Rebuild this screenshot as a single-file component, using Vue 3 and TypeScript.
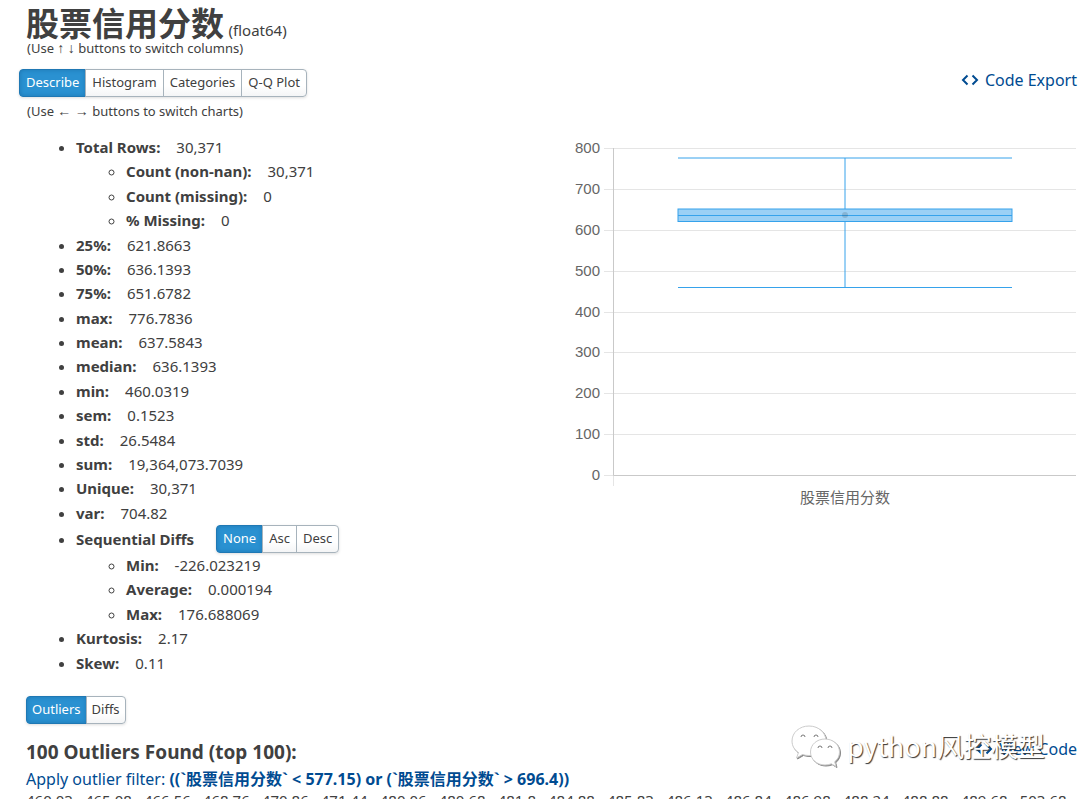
<script setup lang="ts">
import { ref } from 'vue'

interface Stat { label: string; value: string; children?: Stat[] }

const column = '股票信用分数'
const charts = ['Describe', 'Histogram', 'Categories', 'Q-Q Plot']
const sorts = ['None', 'Asc', 'Desc']
const views = ['Outliers', 'Diffs']
const chart = ref('Describe')
const sort = ref('None')
const view = ref('Outliers')

const stats: Stat[] = [
  {
    label: 'Total Rows:', value: '30,371', children: [
      { label: 'Count (non-nan):', value: '30,371' },
      { label: 'Count (missing):', value: '0' },
      { label: '% Missing:', value: '0' },
    ],
  },
  { label: '25%:', value: '621.8663' },
  { label: '50%:', value: '636.1393' },
  { label: '75%:', value: '651.6782' },
  { label: 'max:', value: '776.7836' },
  { label: 'mean:', value: '637.5843' },
  { label: 'median:', value: '636.1393' },
  { label: 'min:', value: '460.0319' },
  { label: 'sem:', value: '0.1523' },
  { label: 'std:', value: '26.5484' },
  { label: 'sum:', value: '19,364,073.7039' },
  { label: 'Unique:', value: '30,371' },
  { label: 'var:', value: '704.82' },
  {
    label: 'Sequential Diffs', value: '', children: [
      { label: 'Min:', value: '-226.023219' },
      { label: 'Average:', value: '0.000194' },
      { label: 'Max:', value: '176.688069' },
    ],
  },
  { label: 'Kurtosis:', value: '2.17' },
  { label: 'Skew:', value: '0.11' },
]

const outliers = [
  '460.03', '465.08', '466.56', '468.76', '470.86', '471.44', '480.06', '480.68', '481.8',
  '484.88', '485.83', '486.13', '486.84', '486.98', '488.24', '488.88', '489.68', '503.68',
]

const ticks = [800, 700, 600, 500, 400, 300, 200, 100, 0]
const tickY = (v: number) => Math.round(340 - v * 0.40875) + 0.5
</script>

<template>
  <main class="page">
    <header>
      <h1>{{ column }} <small>(float64)</small></h1>
      <p class="hint">(Use <span class="arrow">↑ ↓</span> buttons to switch columns)</p>
      <div class="toolbar">
        <div class="group">
          <button v-for="c in charts" :key="c" type="button" :class="{ active: chart === c }" @click="chart = c">{{ c }}</button>
        </div>
        <a class="code" href="#export">
          <svg width="18" height="12" viewBox="0 0 18 12"><path d="M6.500 1.500 2 6 6.500 10.500M11.500 1.500 16 6 11.500 10.500" /></svg>
          <span>Code Export</span>
        </a>
      </div>
      <p class="hint">(Use <span class="arrow">← →</span> buttons to switch charts)</p>
    </header>

    <section class="content">
      <ul class="stats">
        <li v-for="s in stats" :key="s.label">
          <div class="line">
            <b>{{ s.label }}</b>
            <span v-if="s.value">{{ s.value }}</span>
            <div v-else class="group">
              <button v-for="o in sorts" :key="o" type="button" :class="{ active: sort === o }" @click="sort = o">{{ o }}</button>
            </div>
          </div>
          <ul v-if="s.children">
            <li v-for="c in s.children" :key="c.label"><div class="line"><b>{{ c.label }}</b><span>{{ c.value }}</span></div></li>
          </ul>
        </li>
      </ul>
      <svg class="chart" viewBox="0 0 516 380">
        <g v-for="t in ticks" :key="t">
          <line class="grid" x1="44" x2="516" :y1="tickY(t)" :y2="tickY(t)" />
          <text x="40" :y="tickY(t) + 4.5" text-anchor="end">{{ t }}</text>
        </g>
        <line class="grid" x1="53.5" x2="53.5" y1="341" y2="351" />
        <path class="axis" d="M53.5 13V340.5H516" />
        <path class="box-line" d="M118 23H452M285 23V74M118 152.5H452M285 87V152.5" />
        <rect class="box" x="118" y="74" width="334" height="12.5" />
        <path class="box-line" d="M118 80.5H452" />
        <circle cx="285" cy="80" r="3" />
        <text x="285" y="368" text-anchor="middle">{{ column }}</text>
      </svg>
    </section>

    <section class="outliers">
      <div class="group">
        <button v-for="v in views" :key="v" type="button" :class="{ active: view === v }" @click="view = v">{{ v }}</button>
      </div>
      <div class="found">
        <h2>100 Outliers Found (top 100):</h2>
        <a class="code" href="#code">
          <svg width="18" height="12" viewBox="0 0 18 12"><path d="M6.500 1.500 2 6 6.500 10.500M11.500 1.500 16 6 11.500 10.500" /></svg>
          <span>View Code</span>
        </a>
        <div class="watermark">
          <svg width="50" height="44" viewBox="0 0 50 44">
            <path d="M18 2C8.500 2 1 8.500 1 17c0 5 2.500 9 6.500 11.500L5.500 34l6-3.500c2 .7 4.200 1 6.500 1 9.500 0 17-6 17-14.500S27.500 2 18 2Z" />
            <path d="M34 15c-8 0-14.500 5.500-14.500 13S26 41 34 41c2.300 0 4.400-.4 6.300-1.200L45 42.500l-1.300-4.700c3-2.400 4.800-5.800 4.800-9.800 0-7.500-6.500-13-14.500-13Z" />
            <path class="eyes" d="M10 13a2 2 0 0 1 4 0M23 13a2 2 0 0 1 4 0M27 24a2 2 0 0 1 4 0M37 24a2 2 0 0 1 4 0" />
          </svg>
          <span>python风控模型</span>
        </div>
      </div>
      <a class="filter" href="#filter">Apply outlier filter: <b>((`{{ column }}` &lt; 577.15) or (`{{ column }}` &gt; 696.4))</b></a>
      <div class="values"><span v-for="o in outliers" :key="o">{{ o }},</span></div>
    </section>
  </main>
</template>

<style>
body { margin: 0; background: #fff; }
html { overflow: hidden; }
#app { height: 100vh; overflow: hidden; }
</style>

<style scoped>
.page { padding: 7px 3px 0 26px; color: #404040; font: 15px/1.625 "Noto Sans", "Noto Sans CJK SC", sans-serif; }
h1, h2, p, ul { margin: 0; }
h1 { font-size: 33px; line-height: 34px; font-weight: 700; white-space: nowrap; }
h1 small { font-size: 15px; line-height: 1; font-weight: 400; margin-left: -4px; }
.hint { font-size: 13px; line-height: 14px; padding-left: 1px; }
.arrow { font: 14px/1 "Liberation Serif", serif; }
.toolbar { display: flex; justify-content: space-between; align-items: flex-start; margin: 13px 0 7px -7px; }
.group { display: inline-flex; vertical-align: top; border-radius: 4px; box-shadow: 0 1px 3px #0002; }
button { font: 13px/20px "Noto Sans", sans-serif; color: #404040; padding: 2px 6px 4px; border: 1px solid #a7b3bc; margin: 0 0 0 -1px; background: linear-gradient(#fff 60%, #f4f5f6); }
button:first-child { border-radius: 4px 0 0 4px; margin-left: 0; }
button:last-child { border-radius: 0 4px 4px 0; }
button.active { background: #2a91d1; border-color: #1f78b4; color: #fff; box-shadow: inset 0 0 4px #1f78b4; }
a { color: #004b91; text-decoration: none; }
.code { display: flex; align-items: center; gap: 6px; font-size: 16px; line-height: 22px; }
.code path { fill: none; stroke: #004b91; stroke-width: 2; }
.content { display: grid; grid-template-columns: 1fr 1fr; gap: 18px; margin-top: 16px; padding-right: 1px; }
.stats { padding-left: 50px; }
.stats ul { padding-left: 50px; }
.line { display: flex; align-items: center; gap: 16px; }
.line .group { margin-left: 6px; }
.chart { width: 100%; align-self: start; }
.chart text { font: 15px "Liberation Sans", "Noto Sans CJK SC", sans-serif; fill: #666; }
.grid { stroke: #e5e5e5; }
.axis { fill: none; stroke: #c9c9c9; }
.box-line { fill: none; stroke: #36a2eb; }
.box { fill: #9bd0f5; stroke: #36a2eb; }
circle { fill: #0002; }
.outliers { margin-top: 21px; }
.outliers button { padding: 2px 5px 4px; }
.found { position: relative; display: flex; justify-content: space-between; align-items: flex-start; margin-top: 14px; }
h2 { font-size: 19px; line-height: 28px; }
.watermark { position: absolute; right: 32px; top: -14px; display: flex; align-items: center; gap: 6px; font: 27px/44px "Noto Sans CJK SC", sans-serif; color: #fff; text-shadow: 1px 1px 1px #333; }
.watermark svg { filter: drop-shadow(1px 1px 0 #888); }
.watermark path { fill: #fff; stroke: #ccc; stroke-width: 1; }
.watermark .eyes { fill: none; stroke: #777; }
.filter { display: block; font-size: 16px; }
.values { display: flex; gap: 8px; line-height: 16px; white-space: nowrap; }
</style>
